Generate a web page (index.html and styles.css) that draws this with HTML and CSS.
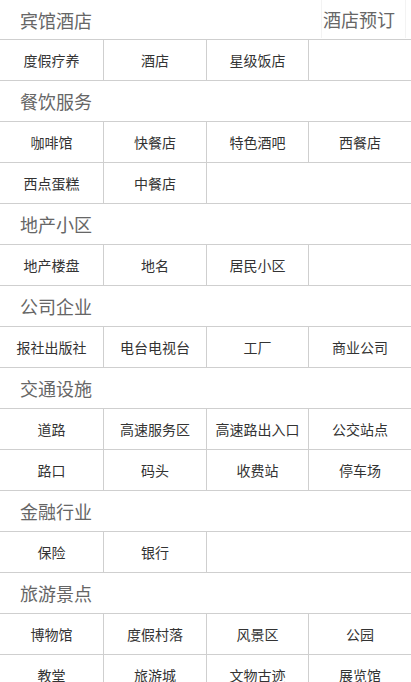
FILE: index.html
```html
<!DOCTYPE html>
<html lang="zh-CN">
<head>
<meta charset="utf-8">
<link rel="stylesheet" href="styles.css">
</head>
<body>
<div class="page">
  <section class="sec first">
    <div class="head"><span class="title">宾馆酒店</span><span class="book">酒店预订</span></div>
    <div class="grid">
      <a class="item">度假疗养</a><a class="item">酒店</a><a class="item">星级饭店</a>
    </div>
  </section>
  <section class="sec">
    <div class="head"><span class="title">餐饮服务</span></div>
    <div class="grid">
      <a class="item">咖啡馆</a><a class="item">快餐店</a><a class="item">特色酒吧</a><a class="item">西餐店</a>
      <a class="item">西点蛋糕</a><a class="item">中餐店</a>
    </div>
  </section>
  <section class="sec">
    <div class="head"><span class="title">地产小区</span></div>
    <div class="grid">
      <a class="item">地产楼盘</a><a class="item">地名</a><a class="item">居民小区</a>
    </div>
  </section>
  <section class="sec">
    <div class="head"><span class="title">公司企业</span></div>
    <div class="grid">
      <a class="item">报社出版社</a><a class="item">电台电视台</a><a class="item">工厂</a><a class="item">商业公司</a>
    </div>
  </section>
  <section class="sec">
    <div class="head"><span class="title">交通设施</span></div>
    <div class="grid">
      <a class="item">道路</a><a class="item">高速服务区</a><a class="item">高速路出入口</a><a class="item">公交站点</a>
      <a class="item">路口</a><a class="item">码头</a><a class="item">收费站</a><a class="item">停车场</a>
    </div>
  </section>
  <section class="sec">
    <div class="head"><span class="title">金融行业</span></div>
    <div class="grid">
      <a class="item">保险</a><a class="item">银行</a>
    </div>
  </section>
  <section class="sec">
    <div class="head"><span class="title">旅游景点</span></div>
    <div class="grid">
      <a class="item">博物馆</a><a class="item">度假村落</a><a class="item">风景区</a><a class="item">公园</a>
      <a class="item">教堂</a><a class="item">旅游城</a><a class="item">文物古迹</a><a class="item">展览馆</a>
    </div>
  </section>
</div>
</body>
</html>
```

FILE: styles.css
```css
html, body {
  margin: 0;
  padding: 0;
  background: #fff;
}
body {
  font-family: "Noto Sans CJK SC", "Noto Sans", sans-serif;
  overflow: hidden;
}
.page {
  width: 411px;
}
.head {
  position: relative;
  height: 40px;
  display: flex;
  align-items: center;
  justify-content: space-between;
  border-top: 1px solid #cfcfcf;
  border-bottom: 1px solid #cfcfcf;
  color: #666;
  font-size: 18px;
  background: #fff;
}
.first .head {
  height: 39px;
  border-top: none;
  align-items: stretch;
}
.title {
  padding-left: 20px;
  display: flex;
  align-items: center;
  line-height: 1;
}
.book {
  display: flex;
  align-items: center;
  line-height: 1;
  height: 38px;
  padding: 0 10px 0 1px;
  margin-right: 5px;
  border-left: 1px solid #f3f3f3;
  border-right: 1px solid #f3f3f3;
}
.grid {
  display: grid;
  grid-template-columns: 104px 103px 102px 102px;
  margin-bottom: -1px;
}
.item {
  height: 40px;
  display: flex;
  align-items: center;
  justify-content: center;
  font-size: 14px;
  line-height: 1;
  color: #333;
  border-right: 1px solid #cfcfcf;
  border-bottom: 1px solid #cfcfcf;
}
.item:nth-child(4n) {
  border-right: none;
}
```
